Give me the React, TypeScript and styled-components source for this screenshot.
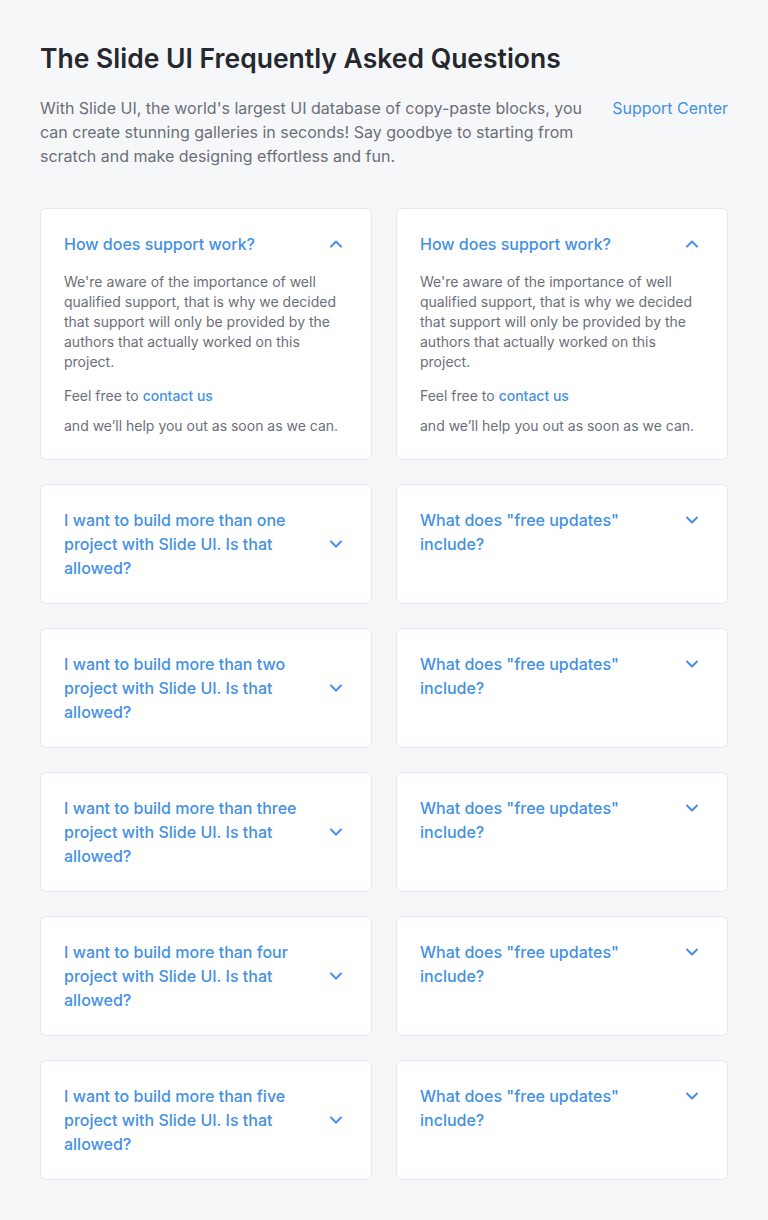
import React, { useState } from 'react';
import styled, { createGlobalStyle } from 'styled-components';

const GlobalStyle = createGlobalStyle`
  * {
    box-sizing: border-box;
  }
  body {
    margin: 0;
    background: #f6f7f9;
    font-family: Inter, 'Noto Sans', sans-serif;
  }
`;

const BLUE = '#4490e2';

const Page = styled.div`
  padding: 40px;
`;

const Title = styled.h1`
  margin: 0;
  font-size: 26.5px;
  line-height: 36px;
  font-weight: 600;
  color: #25282d;
`;

const Intro = styled.div`
  display: flex;
  justify-content: space-between;
  align-items: flex-start;
  gap: 24px;
  margin-top: 20px;
`;

const Lead = styled.p`
  margin: 0;
  max-width: 556px;
  font-size: 16px;
  line-height: 24px;
  color: #6b6f78;
`;

const SupportLink = styled.a`
  flex-shrink: 0;
  font-size: 16px;
  line-height: 24px;
  color: ${BLUE};
  text-decoration: none;
`;

const Grid = styled.div`
  display: grid;
  grid-template-columns: 1fr 1fr;
  column-gap: 24px;
  row-gap: 24px;
  margin-top: 40px;
`;

const Card = styled.div`
  background: #fff;
  border: 1px solid #e6e8ec;
  border-radius: 6px;
  padding: 23px;
  min-height: 120px;
`;

const Question = styled.button<{ $top?: boolean }>`
  display: flex;
  align-items: ${(p) => (p.$top ? 'flex-start' : 'center')};
  justify-content: space-between;
  gap: 24px;
  width: 100%;
  padding: 0;
  border: 0;
  background: none;
  text-align: left;
  cursor: pointer;
  font-family: inherit;
  font-size: 16px;
  line-height: 24px;
  font-weight: 500;
  color: ${BLUE};
`;

const QuestionText = styled.span`
  flex: 1;
`;

const Chevron = styled.span`
  flex-shrink: 0;
  width: 24px;
  height: 24px;
  display: flex;
  align-items: center;
  justify-content: center;
  color: ${BLUE};
`;

const Answer = styled.div`
  margin-top: 16px;
  font-size: 14px;
  line-height: 20px;
  color: #6b6f78;
`;

const AnswerPara = styled.p<{ $gap: number }>`
  margin: ${(p) => p.$gap}px 0 0;
`;

const Contact = styled.a`
  color: ${BLUE};
  font-weight: 500;
  text-decoration: none;
`;

const ChevronIcon = ({ open }: { open: boolean }) => (
  <svg width="14" height="14" viewBox="0 0 14 14" fill="none">
    <path
      d={open ? 'M2 9.5L7 4.5L12 9.5' : 'M2 4.5L7 9.5L12 4.5'}
      stroke="currentColor"
      strokeWidth="2"
      strokeLinecap="round"
      strokeLinejoin="round"
    />
  </svg>
);

type Item = { q: string; top?: boolean; open?: boolean };

const items: Item[] = [
  { q: 'How does support work?', open: true },
  { q: 'How does support work?', open: true },
  { q: 'I want to build more than one project with Slide UI. Is that allowed?' },
  { q: 'What does "free updates" include?', top: true },
  { q: 'I want to build more than two project with Slide UI. Is that allowed?' },
  { q: 'What does "free updates" include?', top: true },
  { q: 'I want to build more than three project with Slide UI. Is that allowed?' },
  { q: 'What does "free updates" include?', top: true },
  { q: 'I want to build more than four project with Slide UI. Is that allowed?' },
  { q: 'What does "free updates" include?', top: true },
  { q: 'I want to build more than five project with Slide UI. Is that allowed?' },
  { q: 'What does "free updates" include?', top: true },
];

const FaqCard = ({ item }: { item: Item }) => {
  const [open, setOpen] = useState(!!item.open);
  return (
    <Card>
      <Question $top={item.top || open} onClick={() => setOpen(!open)}>
        <QuestionText>{item.q}</QuestionText>
        <Chevron>
          <ChevronIcon open={open} />
        </Chevron>
      </Question>
      {open && (
        <Answer>
          <AnswerPara $gap={0}>
            We're aware of the importance of well qualified support, that is why
            we decided that support will only be provided by the authors that
            actually worked on this project.
          </AnswerPara>
          <AnswerPara $gap={14}>
            Feel free to <Contact href="#">contact us</Contact>
          </AnswerPara>
          <AnswerPara $gap={10}>
            and we’ll help you out as soon as we can.
          </AnswerPara>
        </Answer>
      )}
    </Card>
  );
};

const App = () => (
  <>
    <GlobalStyle />
    <Page>
      <Title>The Slide UI Frequently Asked Questions</Title>
      <Intro>
        <Lead>
          With Slide UI, the world's largest UI database of copy-paste blocks,
          you can create stunning galleries in seconds! Say goodbye to starting
          from scratch and make designing effortless and fun.
        </Lead>
        <SupportLink href="#">Support Center</SupportLink>
      </Intro>
      <Grid>
        {items.map((item, i) => (
          <FaqCard key={i} item={item} />
        ))}
      </Grid>
    </Page>
  </>
);

export default App;
